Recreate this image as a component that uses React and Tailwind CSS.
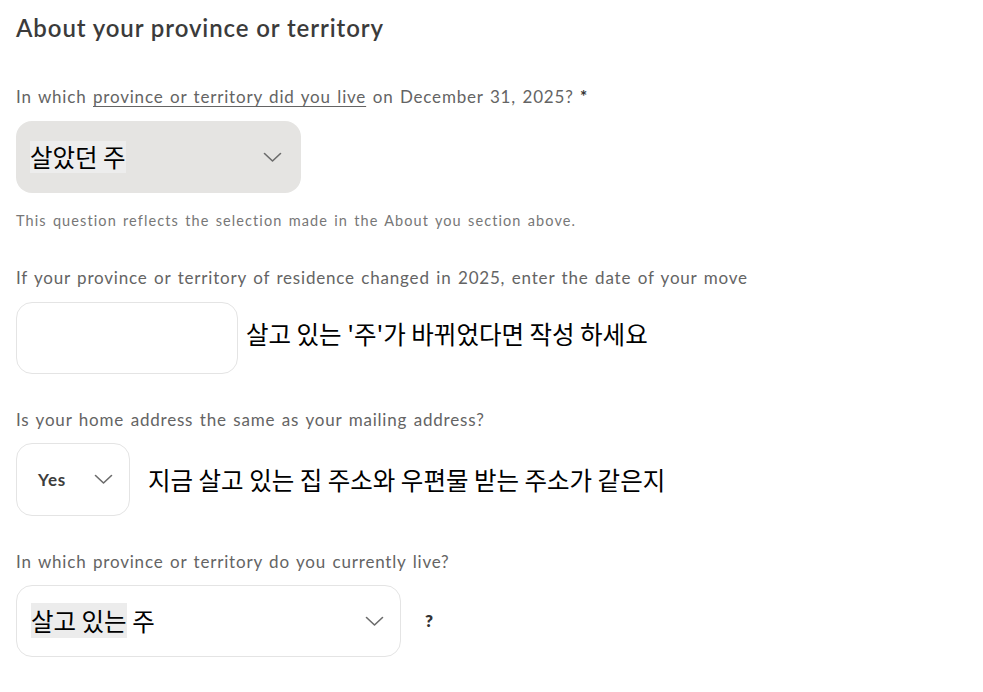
import React from 'react';

const Chevron = ({ className = '' }) => (
  <svg className={className} width="19" height="11" viewBox="0 0 19 11" fill="none">
    <path d="M1.5 1.5L9.5 9L17.5 1.5" stroke="#6b6b6b" strokeWidth="1.6" strokeLinecap="round" strokeLinejoin="round" />
  </svg>
);

const kr = { fontFamily: '"Noto Sans CJK KR", "Noto Sans", sans-serif' };
const lat = { fontFamily: 'Lato, "Noto Sans", sans-serif' };

// label text: widened to match the reference's geometric face
const label = 'text-[17px] leading-[20px] tracking-[0.8px] [word-spacing:1.4px]';

export default function App() {
  return (
    <div className="min-h-screen bg-white text-[#646464]" style={lat}>
      <div className="pl-4 pt-[13px]">
        {/* Heading */}
        <h2 className="text-[24px] font-semibold text-[#3b3b3b] leading-[30px] tracking-[0.9px]">
          About your province or territory
        </h2>

        {/* Province on Dec 31 */}
        <p className={`mt-[44px] ${label}`}>
          In which <span className="underline underline-offset-[3px]">province or territory did you live</span> on December 31, 2025? <span className="text-[#333] font-bold">*</span>
        </p>
        <div className="mt-[14px] flex items-center justify-between w-[285px] h-[72px] rounded-[16px] bg-[#e5e4e2] pl-[14px] pr-[19px]">
          <span className="text-[24.5px] text-black bg-[#ededed] leading-[32px]" style={kr}>살았던 주</span>
          <Chevron />
        </div>
        <p className="mt-[19px] text-[14.5px] leading-[18px] text-[#777] tracking-[1.1px] [word-spacing:1.4px]">
          This question reflects the selection made in the About you section above.
        </p>

        {/* Date of move */}
        <p className={`mt-[38px] ${label}`}>
          If your province or territory of residence changed in 2025, enter the date of your move
        </p>
        <div className="mt-[14px] flex items-center gap-[8px]">
          <div className="w-[222px] h-[72px] rounded-[16px] border border-[#e4e4e4] bg-white" />
          <span className="text-[24.5px] text-black leading-[32px] -mt-[8px]" style={kr}>살고 있는 '주'가 바뀌었다면 작성 하세요</span>
        </div>

        {/* Same address */}
        <p className={`mt-[36px] ${label}`}>
          Is your home address the same as your mailing address?
        </p>
        <div className="mt-[13px] flex items-center gap-[18px]">
          <div className="flex items-center justify-between w-[114px] h-[73px] rounded-[16px] border border-[#e4e4e4] bg-white pl-[21px] pr-[16px]">
            <span className="text-[17px] font-bold text-[#3d3d3d] tracking-[0.8px]">Yes</span>
            <Chevron />
          </div>
          <span className="text-[24.5px] text-black leading-[32px]" style={kr}>지금 살고 있는 집 주소와 우편물 받는 주소가 같은지</span>
        </div>

        {/* Current province */}
        <p className={`mt-[36px] ${label}`}>
          In which province or territory do you currently live?
        </p>
        <div className="mt-[13px] flex items-center gap-[24px]">
          <div className="flex items-center justify-between w-[385px] h-[72px] rounded-[16px] border border-[#e4e4e4] bg-white pl-[14px] pr-[16px]">
            <span className="text-[24.5px] text-black leading-[32px]" style={kr}>
              <span className="bg-[#ececec]">살고 있는</span> 주
            </span>
            <Chevron />
          </div>
          <span className="text-[17px] font-extrabold text-[#333]">?</span>
        </div>
      </div>
    </div>
  );
}
